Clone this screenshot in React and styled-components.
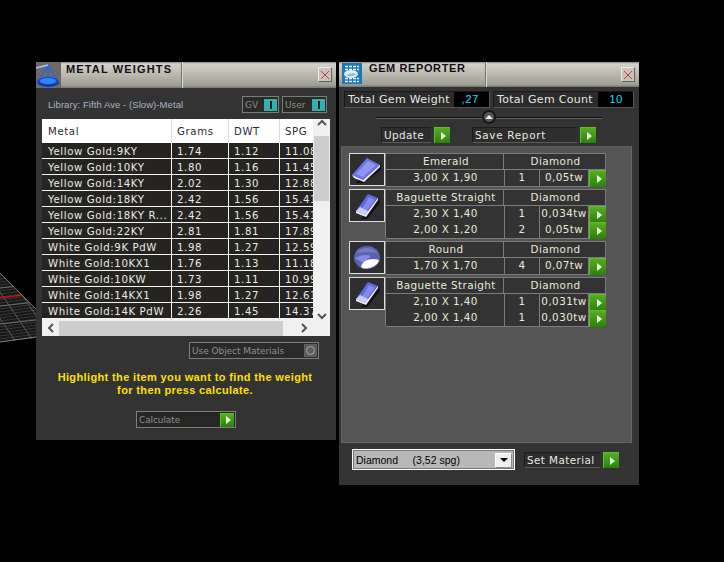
import React from "react";
import styled, { createGlobalStyle } from "styled-components";

const GlobalStyle = createGlobalStyle`
  html, body {
    margin: 0;
    padding: 0;
    background: #000;
  }
  * {
    box-sizing: border-box;
  }
`;

const Desktop = styled.div`
  position: relative;
  width: 724px;
  height: 562px;
  overflow: hidden;
  display: flex;
  align-items: flex-start;
  gap: 3px;
  padding: 62px 0 0 36px;
  background: #000;
  font-family: "DejaVu Sans", Verdana, sans-serif;
`;

const Viewport = styled.svg`
  position: absolute;
  left: 0;
  top: 262px;
`;

const Panel = styled.section`
  width: 300px;
  height: ${(p) => p.$height}px;
  background: #333333;
  flex-shrink: 0;
`;

const TitleBar = styled.header`
  height: ${(p) => p.$height || 26}px;
  display: flex;
  align-items: stretch;
  background: linear-gradient(#8a8880 0, #d3d1c8 2px, #bdbbb1 45%, #a09e95 90%, #77766f 100%);
`;

const TitleIcon = styled.div`
  width: 25px;
  flex-shrink: 0;
  display: flex;
  align-items: center;
  justify-content: center;
`;

const TitleTab = styled.h1`
  margin: 0;
  width: ${(p) => p.$width}px;
  padding: ${(p) => p.$top}px 0 0 5px;
  font: bold 11px "Liberation Sans", Arial, sans-serif;
  letter-spacing: ${(p) => p.$spacing}px;
  color: #10101c;
  border-right: 1px solid #77766f;
  box-shadow: 1px 0 0 #dad8d0;
  white-space: nowrap;
`;

const CloseButton = styled.button`
  margin: 5px 4px 0 auto;
  width: 14px;
  height: 15px;
  padding: 0;
  display: flex;
  align-items: center;
  justify-content: center;
  background: #c6c4bb;
  border: 1px solid;
  border-color: #ecebe5 #62615b #62615b #ecebe5;
`;

const LibraryRow = styled.div`
  height: 31px;
  padding: 8px 9px 0 12px;
  display: flex;
  align-items: flex-start;
  justify-content: space-between;
`;

const LibraryName = styled.span`
  margin-top: 3px;
  font: 9.5px "Liberation Sans", Arial, sans-serif;
  letter-spacing: 0.07px;
  color: #a9b4c0;
`;

const Toggles = styled.div`
  display: flex;
  gap: 3px;
`;

const Toggle = styled.div`
  width: ${(p) => p.$width}px;
  height: 17px;
  padding: 1px 1px 1px 2px;
  display: flex;
  align-items: center;
  justify-content: space-between;
  border: 1px solid #7b7b7b;
  background: #2a2a28;
  font: 9px "DejaVu Sans", sans-serif;
  color: #8a8a8a;
`;

const ToggleKnob = styled.span`
  width: 13px;
  height: 12px;
  display: flex;
  align-items: center;
  justify-content: center;
  background: #37aeae;
  &::after {
    content: "";
    width: 2px;
    height: 8px;
    background: #10201f;
  }
`;

const TableFrame = styled.div`
  width: 288px;
  height: 217px;
  margin-left: 6px;
  background: #f0f0f0;
  display: grid;
  grid-template-columns: 271px 17px;
  grid-template-rows: 201px 16px;
`;

const TableClip = styled.div`
  overflow: hidden;
`;

const TableRow = styled.div`
  display: grid;
  grid-template-columns: 130px 57px 51px 33px;
  height: ${(p) => (p.$head ? 24 : 16)}px;
  background: ${(p) => (p.$head ? "#fff" : "#252421")};
  border-bottom: ${(p) => (p.$head ? "0" : "1px solid #f4f4f4")};
`;

const TableCell = styled.div`
  padding: ${(p) => (p.$head ? "6px 0 0 5px" : "2px 0 0 5px")};
  border-right: ${(p) => (p.$last ? "0" : p.$head ? "1px solid #dcdcdc" : "1px solid #f4f4f4")};
  font-size: 10.2px;
  line-height: 13px;
  letter-spacing: 0.6px;
  white-space: nowrap;
  overflow: hidden;
  color: ${(p) => (p.$head ? "#2c2c2c" : "#e8ebe6")};
  &:first-child {
    padding-left: 6px;
  }
`;

const VScroll = styled.div`
  display: flex;
  flex-direction: column;
  align-items: center;
  justify-content: space-between;
  padding: 0 1px;
`;

const VThumb = styled.div`
  width: 15px;
  height: 65px;
  margin-bottom: 102px;
  background: #cdcdcd;
`;

const HScroll = styled.div`
  grid-column: 1 / 3;
  display: flex;
  align-items: center;
  padding: 0 20px 0 0;
`;

const HThumb = styled.div`
  width: 224px;
  height: 15px;
  background: #cdcdcd;
  margin-right: 17px;
`;

const ScrollArrow = styled.svg`
  flex-shrink: 0;
  display: block;
`;

const ArrowSlot = styled.span`
  width: 17px;
  flex-shrink: 0;
  display: flex;
  justify-content: center;
`;

const OptionRow = styled.div`
  padding: 6px 0 0 153px;
`;

const OptionBox = styled.div`
  width: 130px;
  height: 17px;
  padding: 1px 1px 1px 2px;
  display: flex;
  align-items: center;
  justify-content: space-between;
  border: 1px solid #7d7d7d;
  background: #2a2a28;
  font-size: 9px;
  letter-spacing: -0.05px;
  color: #8e8e8e;
`;

const OptionKnob = styled.span`
  width: 13px;
  height: 13px;
  display: flex;
  align-items: center;
  justify-content: center;
  background: #5d5d5d;
  &::after {
    content: "";
    width: 7px;
    height: 7px;
    border-radius: 50%;
    border: 1px solid #a5a5a5;
  }
`;

const Hint = styled.p`
  margin: 12px 0 0;
  padding-right: 2px;
  text-align: center;
  font: bold 11px/13px "Liberation Sans", Arial, sans-serif;
  letter-spacing: 0.37px;
  color: #ffe000;
`;

const CalcRow = styled.div`
  padding: 14px 0 0 100px;
`;

const CalcBox = styled.div`
  width: 100px;
  height: 17px;
  padding: 0 1px 0 2px;
  display: flex;
  align-items: center;
  justify-content: space-between;
  border: 1px solid #7d7d7d;
  background: #272624;
  font-size: 8.8px;
  color: #8e8e8e;
`;

const Green = styled.span`
  width: ${(p) => p.$size || 16}px;
  height: ${(p) => p.$size || 16}px;
  flex-shrink: 0;
  display: flex;
  align-items: center;
  justify-content: center;
  background: linear-gradient(#55ad24, #3b9412 60%, #2c7f0a);
  border-top: 1px solid #63b934;
  border-left: 1px solid #63b934;
  &::after {
    content: "";
    margin-left: 2px;
    border-left: 5px solid #eef8dd;
    border-top: 4px solid transparent;
    border-bottom: 4px solid transparent;
  }
`;

const StatsRow = styled.div`
  height: 20px;
  padding: 4px 5px 0;
  display: flex;
  justify-content: space-between;
`;

const Stat = styled.div`
  height: 17px;
  width: ${(p) => p.$width}px;
  display: flex;
  border: 1px solid #1a1a1a;
  border-right-color: #555;
  border-bottom-color: #555;
  background: #2b2b2b;
`;

const StatLabel = styled.span`
  flex: 1;
  padding-left: 3px;
  font-size: 11px;
  line-height: 15px;
  letter-spacing: 0.3px;
  color: #e6e8e2;
  white-space: nowrap;
`;

const StatValue = styled.span`
  width: ${(p) => p.$width}px;
  padding-right: ${(p) => p.$pad}px;
  text-align: right;
  background: #000;
  font: 11.5px/15px "Liberation Sans", Arial, sans-serif;
  letter-spacing: 0.5px;
  color: #12dcf4;
`;

const SliderRow = styled.div`
  position: relative;
  height: 20px;
  margin: 0 37px;
  display: flex;
  align-items: center;
  justify-content: center;
  &::before {
    content: "";
    position: absolute;
    left: 0;
    right: 0;
    top: 10px;
    height: 1px;
    background: #0c0c0c;
    box-shadow: 0 1px 0 #666;
  }
`;

const SliderKnob = styled.span`
  position: relative;
  width: 14px;
  height: 14px;
  border-radius: 50%;
  background: #555;
  border: 2px solid #181818;
  display: flex;
  align-items: center;
  justify-content: center;
  &::after {
    content: "";
    border-bottom: 4px solid #eee;
    border-left: 4px solid transparent;
    border-right: 4px solid transparent;
  }
`;

const ActionRow = styled.div`
  height: 16px;
  padding-left: 42px;
  display: flex;
`;

const ActionGroup = styled.div`
  display: flex;
  gap: 3px;
  margin-right: ${(p) => p.$gap || 0}px;
  margin-top: ${(p) => p.$top || 0}px;
`;

const ActionLabel = styled.span`
  width: ${(p) => p.$width}px;
  height: 16px;
  padding-left: 2px;
  border: 1px solid #1c1c1c;
  border-right: 0;
  border-bottom-color: #5a5a5a;
  font-size: 10.4px;
  line-height: 14px;
  letter-spacing: ${(p) => p.$spacing || 0.42}px;
  color: #e6e8e2;
  white-space: nowrap;
  background: #2d2d2d;
`;

const GemList = styled.div`
  width: 291px;
  height: 297px;
  margin: 3px 0 0 2px;
  padding: 6px 7px;
  display: flex;
  flex-direction: column;
  gap: 3px;
  background: #555555;
  border: 1px solid #666;
  border-top-color: #5c5c5c;
`;

const GemGroup = styled.div`
  display: flex;
  align-items: flex-start;
`;

const GemThumb = styled.div`
  width: 36px;
  height: 33px;
  flex-shrink: 0;
  display: flex;
  align-items: center;
  justify-content: center;
  background: #2e2e2e;
  border: 1px solid #dcdcdc;
`;

const GemTable = styled.div`
  width: 221px;
  border-top: 1px solid #7c7c7c;
  border-left: 1px solid #7c7c7c;
`;

const GemRow = styled.div`
  height: 16px;
  display: grid;
  grid-template-columns: ${(p) => (p.$head ? "118px 102px" : "119px 35px 49px 17px")};
`;

const GemCell = styled.div`
  padding-left: ${(p) => p.$pad || 0}px;
  text-align: center;
  font-size: 10.4px;
  line-height: 15px;
  letter-spacing: 0.42px;
  white-space: nowrap;
  color: #e6e8d8;
  background: #333;
  border-bottom: 1px solid #7c7c7c;
  border-right: 1px solid #7c7c7c;
`;

const BottomRow = styled.div`
  display: flex;
  align-items: flex-start;
  margin-top: 6px;
  padding-left: 13px;
`;

const Select = styled.div`
  width: 163px;
  height: 21px;
  padding: 1px 1px 0 2px;
  display: flex;
  align-items: center;
  justify-content: space-between;
  margin-right: 9px;
  background: #b8b8b8;
  border: 2px solid #fff;
  outline: 1px solid #777;
  outline-offset: -2px;
  font: 10.5px "Liberation Sans", Arial, sans-serif;
  color: #000;
  white-space: pre;
`;

const SelectDrop = styled.span`
  width: 17px;
  height: 15px;
  display: flex;
  align-items: center;
  justify-content: center;
  background: #efefef;
  border: 1px solid #8c8c8c;
  border-top-color: #fff;
  border-left-color: #fff;
  &::after {
    content: "";
    border-top: 4px solid #000;
    border-left: 4px solid transparent;
    border-right: 4px solid transparent;
  }
`;

const metals = [
  ["Yellow Gold:9KY", "1.74", "1.12", "11.08"],
  ["Yellow Gold:10KY", "1.80", "1.16", "11.45"],
  ["Yellow Gold:14KY", "2.02", "1.30", "12.88"],
  ["Yellow Gold:18KY", "2.42", "1.56", "15.41"],
  ["Yellow Gold:18KY R...", "2.42", "1.56", "15.41"],
  ["Yellow Gold:22KY", "2.81", "1.81", "17.89"],
  ["White Gold:9K PdW", "1.98", "1.27", "12.59"],
  ["White Gold:10KX1", "1.76", "1.13", "11.18"],
  ["White Gold:10KW", "1.73", "1.11", "10.99"],
  ["White Gold:14KX1", "1.98", "1.27", "12.61"],
  ["White Gold:14K PdW", "2.26", "1.45", "14.37"],
];

const gems = [
  { cut: "Emerald", shape: "emerald", rows: [["3,00 X 1,90", "1", "0,05tw"]] },
  {
    cut: "Baguette Straight",
    shape: "baguette",
    rows: [
      ["2,30 X 1,40", "1", "0,034tw"],
      ["2,00 X 1,20", "2", "0,05tw"],
    ],
  },
  { cut: "Round", shape: "round", rows: [["1,70 X 1,70", "4", "0,07tw"]] },
  {
    cut: "Baguette Straight",
    shape: "baguette",
    rows: [
      ["2,10 X 1,40", "1", "0,031tw"],
      ["2,00 X 1,40", "1", "0,030tw"],
    ],
  },
];

const Chevron = ({ dir }) => {
  const paths = {
    up: "M1 6 L5 2 L9 6",
    down: "M1 2 L5 6 L9 2",
    left: "M6 1 L2 5 L6 9",
    right: "M2 1 L6 5 L2 9",
  };
  const flat = dir === "up" || dir === "down";
  return (
    <ScrollArrow width={flat ? 10 : 8} height={flat ? 8 : 10} viewBox={flat ? "0 0 10 8" : "0 0 8 10"}>
      <path d={paths[dir]} fill="none" stroke="#555" strokeWidth="2" />
    </ScrollArrow>
  );
};

const CloseIcon = () => (
  <svg width="10" height="10" viewBox="0 0 10 10">
    <path d="M1 1 L9 9 M9 1 L1 9" stroke="#d8383a" strokeWidth="1" />
  </svg>
);

const ScaleIcon = () => (
  <svg width="25" height="26" viewBox="0 0 25 26">
    <rect width="25" height="26" fill="#6a6a66" />
    <path d="M12 3 L3 19 M12 3 L12 19 M12 3 L21 19" stroke="#1f66f0" strokeWidth="1.2" fill="none" />
    <path d="M0 6 L12 3" stroke="#a8c8ff" strokeWidth="1.6" />
    <ellipse cx="12" cy="20" rx="11" ry="5" fill="#1648d8" />
    <ellipse cx="12" cy="19" rx="8" ry="3" fill="#2f86ff" />
    <path d="M2 21 Q12 27 23 21" stroke="#0a2a90" fill="none" />
  </svg>
);

const ReportIcon = () => (
  <svg width="25" height="25" viewBox="0 0 25 25">
    <rect x="3" y="1" width="20" height="21" fill="#1878b8" />
    <path d="M6 4.5 H20 M6 7.5 H20 M6 16.5 H20 M6 19.5 H20" stroke="#eaf6ff" strokeWidth="1.6" strokeDasharray="3 1" />
    <ellipse cx="12" cy="12" rx="7" ry="4" fill="#e8edf2" />
    <path d="M7 13 Q13 10 18 12 Q13 16 7 13" fill="#9db6c9" />
  </svg>
);

const GemIcon = ({ shape }) => {
  if (shape === "round") {
    return (
      <svg width="28" height="25" viewBox="0 0 28 25">
        <ellipse cx="14" cy="12.5" rx="13" ry="11.5" fill="#5a62b8" />
        <path d="M3 8 Q14 -2 25 8 Q14 6 3 8" fill="#777db8" />
        <path d="M2 13 Q10 8 18 11 L10 18 Z" fill="#848ce0" />
        <path d="M8 22 Q10 14 20 14 Q26 14 26 16 Q23 22 14 23.5 Q10 24 8 22" fill="#fff" />
      </svg>
    );
  }
  if (shape === "emerald") {
    return (
      <svg width="32" height="28" viewBox="0 0 32 28">
        <path d="M4 27 L30 9 L30 14 L12 27 Z" fill="#111" />
        <polygon points="1,19 16,2 29,9 12,24" fill="#6c74e6" />
        <polygon points="5,18 17,5 25,9 12,21" fill="#9097f0" />
        <polygon points="1,19 12,24 29,9 29,11 13,26 3,22" fill="#e8ebff" />
      </svg>
    );
  }
  return (
    <svg width="28" height="28" viewBox="0 0 28 28">
      <path d="M8 27 L26 7 L27 11 L14 27 Z" fill="#111" />
      <polygon points="3,19 15,2 25,6 12,23" fill="#5f68de" />
      <polygon points="8,18 16,5 22,8 12,21" fill="#838bee" />
      <polygon points="3,19 12,23 15,19 7,15" fill="#c8ccfa" />
      <polygon points="12,23 25,6 25,8 13,25 3,21 3,19" fill="#f2f3ff" />
    </svg>
  );
};

const range = (from, to, step) => {
  const out = [];
  for (let v = from; v <= to; v += step) out.push(v);
  return out;
};

// floor grid of the 3d view peeking out behind the panel
const FloorGrid = () => (
  <Viewport width="36" height="90" viewBox="0 0 36 90">
    <defs>
      <clipPath id="floor">
        <polygon points="0,11 36,47 36,76 0,80" />
      </clipPath>
    </defs>
    <g clipPath="url(#floor)">
      <rect width="36" height="90" fill="#141414" />
      {range(8, 86, 3).map((y) => (
        <path key={y} d={`M0 ${y} L36 ${y - 5}`} stroke="#3c3c3c" strokeWidth="1" />
      ))}
      {range(-40, 40, 5).map((x) => (
        <path key={x} d={`M${x} 0 L${x + 60} 90`} stroke="#262626" strokeWidth="1" />
      ))}
      {[26, 44, 62].map((y) => (
        <path key={y} d={`M0 ${y} L36 ${y - 4}`} stroke="#6e6e6e" strokeWidth="1" />
      ))}
      {[-18, 0, 20].map((x) => (
        <path key={x} d={`M${x} 30 L${x + 34} 80`} stroke="#5c5c5c" strokeWidth="1" />
      ))}
    </g>
    <path d="M0 11 L36 47" stroke="#6e6e6e" strokeWidth="1" />
    <path d="M0 80 L36 75" stroke="#7c7c7c" strokeWidth="1" />
    <path d="M0 36 L22 33" stroke="#c01616" strokeWidth="1.6" />
  </Viewport>
);

const MetalWeights = () => (
  <Panel $height={378}>
    <TitleBar>
      <TitleIcon>
        <ScaleIcon />
      </TitleIcon>
      <TitleTab $width={121} $top={1} $spacing={1.15}>
        METAL WEIGHTS
      </TitleTab>
      <CloseButton aria-label="Close">
        <CloseIcon />
      </CloseButton>
    </TitleBar>
    <LibraryRow>
      <LibraryName>Library: Fifth Ave - (Slow)-Metal</LibraryName>
      <Toggles>
        <Toggle $width={37}>
          GV
          <ToggleKnob />
        </Toggle>
        <Toggle $width={45}>
          User
          <ToggleKnob />
        </Toggle>
      </Toggles>
    </LibraryRow>
    <TableFrame>
      <TableClip>
        <TableRow $head>
          {["Metal", "Grams", "DWT", "SPG"].map((h, i) => (
            <TableCell key={h} $head $last={i === 3}>
              {h}
            </TableCell>
          ))}
        </TableRow>
        {metals.map((row) => (
          <TableRow key={row[0]}>
            {row.map((value, i) => (
              <TableCell key={i} $last={i === 3}>
                {value}
              </TableCell>
            ))}
          </TableRow>
        ))}
      </TableClip>
      <VScroll>
        <Chevron dir="up" />
        <VThumb />
        <Chevron dir="down" />
      </VScroll>
      <HScroll>
        <ArrowSlot>
          <Chevron dir="left" />
        </ArrowSlot>
        <HThumb />
        <Chevron dir="right" />
      </HScroll>
    </TableFrame>
    <OptionRow>
      <OptionBox>
        Use Object Materials
        <OptionKnob />
      </OptionBox>
    </OptionRow>
    <Hint>
      Highlight the item you want to find the weight
      <br />
      for then press calculate.
    </Hint>
    <CalcRow>
      <CalcBox>
        Calculate
        <Green $size={14} />
      </CalcBox>
    </CalcRow>
  </Panel>
);

const GemReporter = () => (
  <Panel $height={423}>
    <TitleBar $height={25}>
      <TitleIcon>
        <ReportIcon />
      </TitleIcon>
      <TitleTab $width={122} $top={0} $spacing={0.6}>
        GEM REPORTER
      </TitleTab>
      <CloseButton aria-label="Close">
        <CloseIcon />
      </CloseButton>
    </TitleBar>
    <StatsRow>
      <Stat $width={146}>
        <StatLabel>Total Gem Weight</StatLabel>
        <StatValue $width={35} $pad={10}>
          ,27
        </StatValue>
      </Stat>
      <Stat $width={141}>
        <StatLabel>Total Gem Count</StatLabel>
        <StatValue $width={35} $pad={10}>
          10
        </StatValue>
      </Stat>
    </StatsRow>
    <SliderRow>
      <SliderKnob />
    </SliderRow>
    <ActionRow>
      <ActionGroup $gap={22}>
        <ActionLabel $width={50}>Update</ActionLabel>
        <Green />
      </ActionGroup>
      <ActionGroup>
        <ActionLabel $width={105} $spacing={0.7}>
          Save Report
        </ActionLabel>
        <Green />
      </ActionGroup>
    </ActionRow>
    <GemList>
      {gems.map((gem, g) => (
        <GemGroup key={g}>
          <GemThumb>
            <GemIcon shape={gem.shape} />
          </GemThumb>
          <GemTable>
            <GemRow $head>
              <GemCell $pad={3}>{gem.cut}</GemCell>
              <GemCell $pad={2}>Diamond</GemCell>
            </GemRow>
            {gem.rows.map((row, r) => (
              <GemRow key={r}>
                <GemCell $pad={1}>{row[0]}</GemCell>
                <GemCell>{row[1]}</GemCell>
                <GemCell>{row[2]}</GemCell>
                <Green $size={17} />
              </GemRow>
            ))}
          </GemTable>
        </GemGroup>
      ))}
    </GemList>
    <BottomRow>
      <Select>
        {"Diamond     (3,52 spg)"}
        <SelectDrop />
      </Select>
      <ActionGroup $top={3}>
        <ActionLabel $width={76}>Set Material</ActionLabel>
        <Green />
      </ActionGroup>
    </BottomRow>
  </Panel>
);

const App = () => (
  <Desktop>
    <GlobalStyle />
    <FloorGrid />
    <MetalWeights />
    <GemReporter />
  </Desktop>
);

export default App;
